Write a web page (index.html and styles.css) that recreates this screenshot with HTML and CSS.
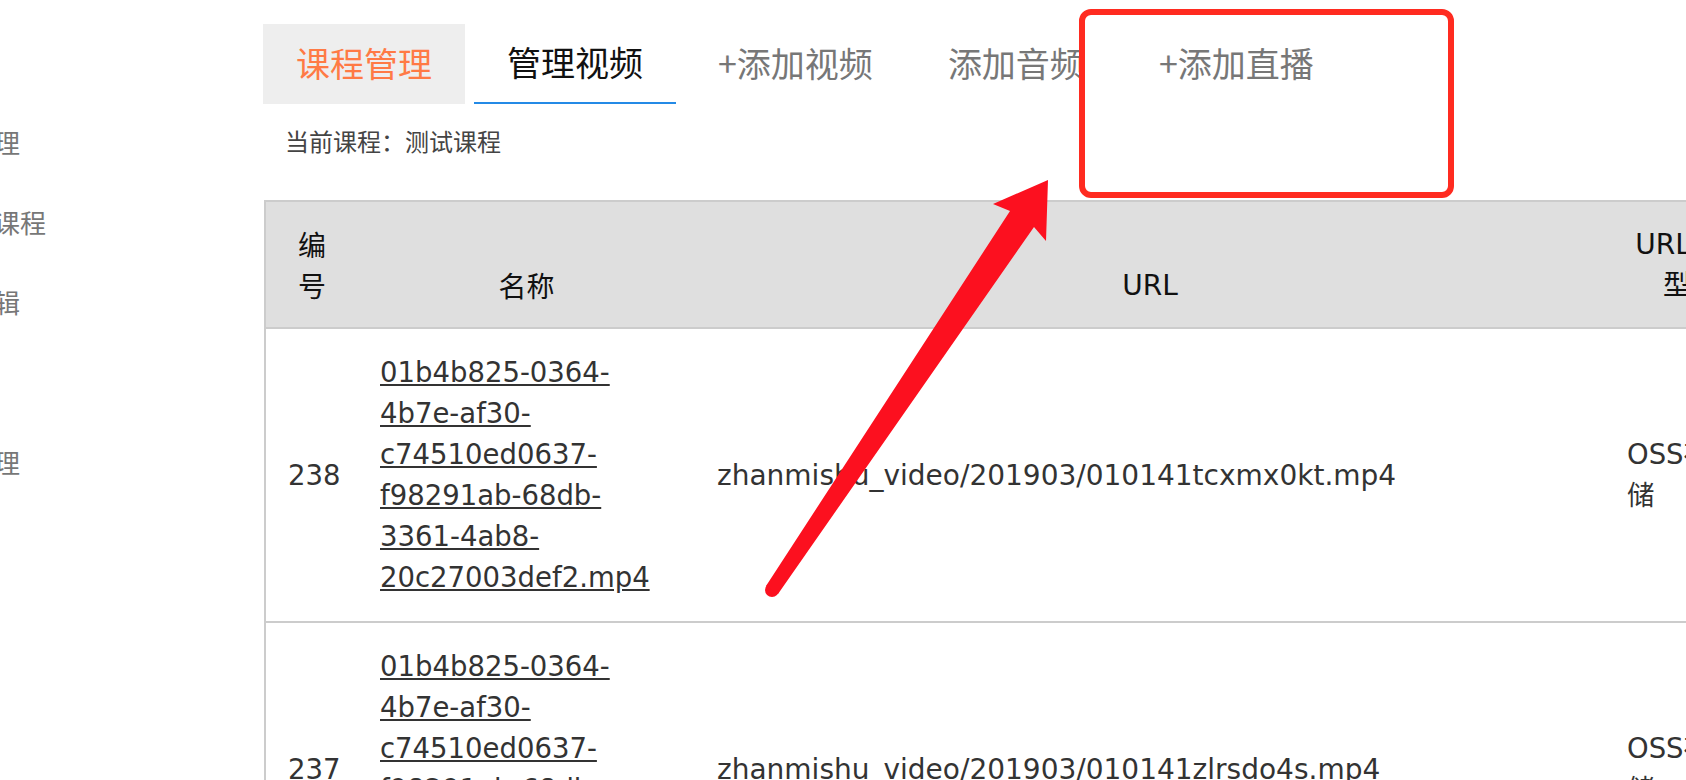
FILE: index.html
```html
<!DOCTYPE html>
<html lang="zh-CN">
<head>
    <meta charset="UTF-8"/>
    <title>管理视频</title>
    <link rel="stylesheet" href="styles.css">
</head>
<body>

    <div class="page">
        <div class="side-menu">
            <div class="side-item">课程管理</div>
            <div class="side-item">添加新课程</div>
            <div class="side-item">课程编辑</div>
            <div class="side-item">评论</div>
            <div class="side-item">订单管理</div>
        </div>

        <div class="main">
            <div class="tabs">
                <div class="tab tab-home">课程管理</div>
                <div class="tab tab-active">管理视频</div>
                <div class="tab">+添加视频</div>
                <div class="tab">添加音频</div>
                <div class="tab">+添加直播</div>
            </div>

            <div class="current-course">当前课程：测试课程</div>

            <table class="video-table">
                <colgroup>
                    <col class="col-id"/>
                    <col class="col-name"/>
                    <col class="col-url"/>
                    <col class="col-type"/>
                </colgroup>
                <thead>
                    <tr>
                        <th>编号</th>
                        <th>名称</th>
                        <th>URL</th>
                        <th>URL类型</th>
                    </tr>
                </thead>
                <tbody>
                    <tr>
                        <td>238</td>
                        <td><a href="javascript:void(0)">01b4b825-0364-4b7e-af30-c74510ed0637-f98291ab-68db-3361-4ab8-20c27003def2.mp4</a></td>
                        <td class="url-cell">zhanmishu_video/201903/010141tcxmx0kt.mp4</td>
                        <td>OSS存储</td>
                    </tr>
                    <tr>
                        <td>237</td>
                        <td><a href="javascript:void(0)">01b4b825-0364-4b7e-af30-c74510ed0637-f98291ab-68db-3361-4ab8-20c27003def2.mp4</a></td>
                        <td class="url-cell">zhanmishu_video/201903/010141zlrsdo4s.mp4</td>
                        <td>OSS存储</td>
                    </tr>
                </tbody>
            </table>
        </div>
    </div>

    <!-- annotation drawn over the screenshot -->
    <svg class="markup" width="1686" height="780" viewBox="0 0 1686 780">
        <rect x="1082" y="12" width="369" height="183" rx="9" ry="9" fill="none" stroke="#ff2b20" stroke-width="6"/>
        <circle cx="772" cy="590" r="7" fill="#fc101f"/>
        <polygon fill="#fc101f" points="766,586 1010,211 993,204 1048,180 1046,241 1034,227 778,594"/>
    </svg>

</body>
</html>
```

FILE: styles.css
```css
body {
    margin: 0;
    padding: 0;
    background-color: #fff;
    font-family: "Noto Sans CJK SC", sans-serif;
    overflow: hidden;
    height: 780px;
}

.page {
    display: flex;
    margin-left: -84px;
}

.side-menu {
    flex: 0 0 347px;
    padding-top: 102px;
}

.side-item {
    height: 80px;
    line-height: 80px;
    font-size: 26px;
    color: #777;
    white-space: nowrap;
}

.main {
    flex: 1;
    padding-top: 24px;
    min-width: 0;
}

.tabs {
    display: flex;
    gap: 9px;
}

.tab {
    box-sizing: border-box;
    height: 80px;
    line-height: 78px;
    padding: 0 33px;
    font-size: 34px;
    color: #777;
    white-space: nowrap;
}

.tab-home {
    background-color: #eee;
    color: #ff7a45;
}

.tab-active {
    color: #111;
    border-bottom: 2px solid #248ae6;
    line-height: 76px;
}

.current-course {
    margin-top: 20px;
    padding-left: 22px;
    font-size: 24px;
    line-height: 34px;
    color: #444;
}

.video-table {
    margin-top: 42px;
    margin-left: 1px;
    border-collapse: collapse;
    table-layout: fixed;
    width: 1485px;
    border: 2px solid #ccc;
    font-family: "DejaVu Sans", "Noto Sans CJK SC", sans-serif;
    font-size: 27.5px;
    line-height: 41px;
}

.col-id { width: 93px; }
.col-name { width: 337px; }
.col-url { width: 910px; }
.col-type { width: 145px; }

.video-table th {
    background-color: #dfdfdf;
    color: #111;
    font-weight: normal;
    font-family: "Noto Sans CJK SC", sans-serif;
    font-size: 28px;
    text-align: center;
    vertical-align: bottom;
    padding: 22px 22px 21px;
    border-bottom: 2px solid #ccc;
}

.video-table th:nth-child(3),
.video-table th:nth-child(4) {
    font-family: "DejaVu Sans", "Noto Sans CJK SC", sans-serif;
}

.video-table td {
    padding: 23px 22px;
    color: #333;
    vertical-align: middle;
    border-top: 2px solid #ccc;
}

.video-table .url-cell {
    font-size: 28px;
}

.video-table a {
    color: #333;
    text-decoration: underline;
}

.markup {
    position: absolute;
    left: 0;
    top: 0;
    pointer-events: none;
}
```
